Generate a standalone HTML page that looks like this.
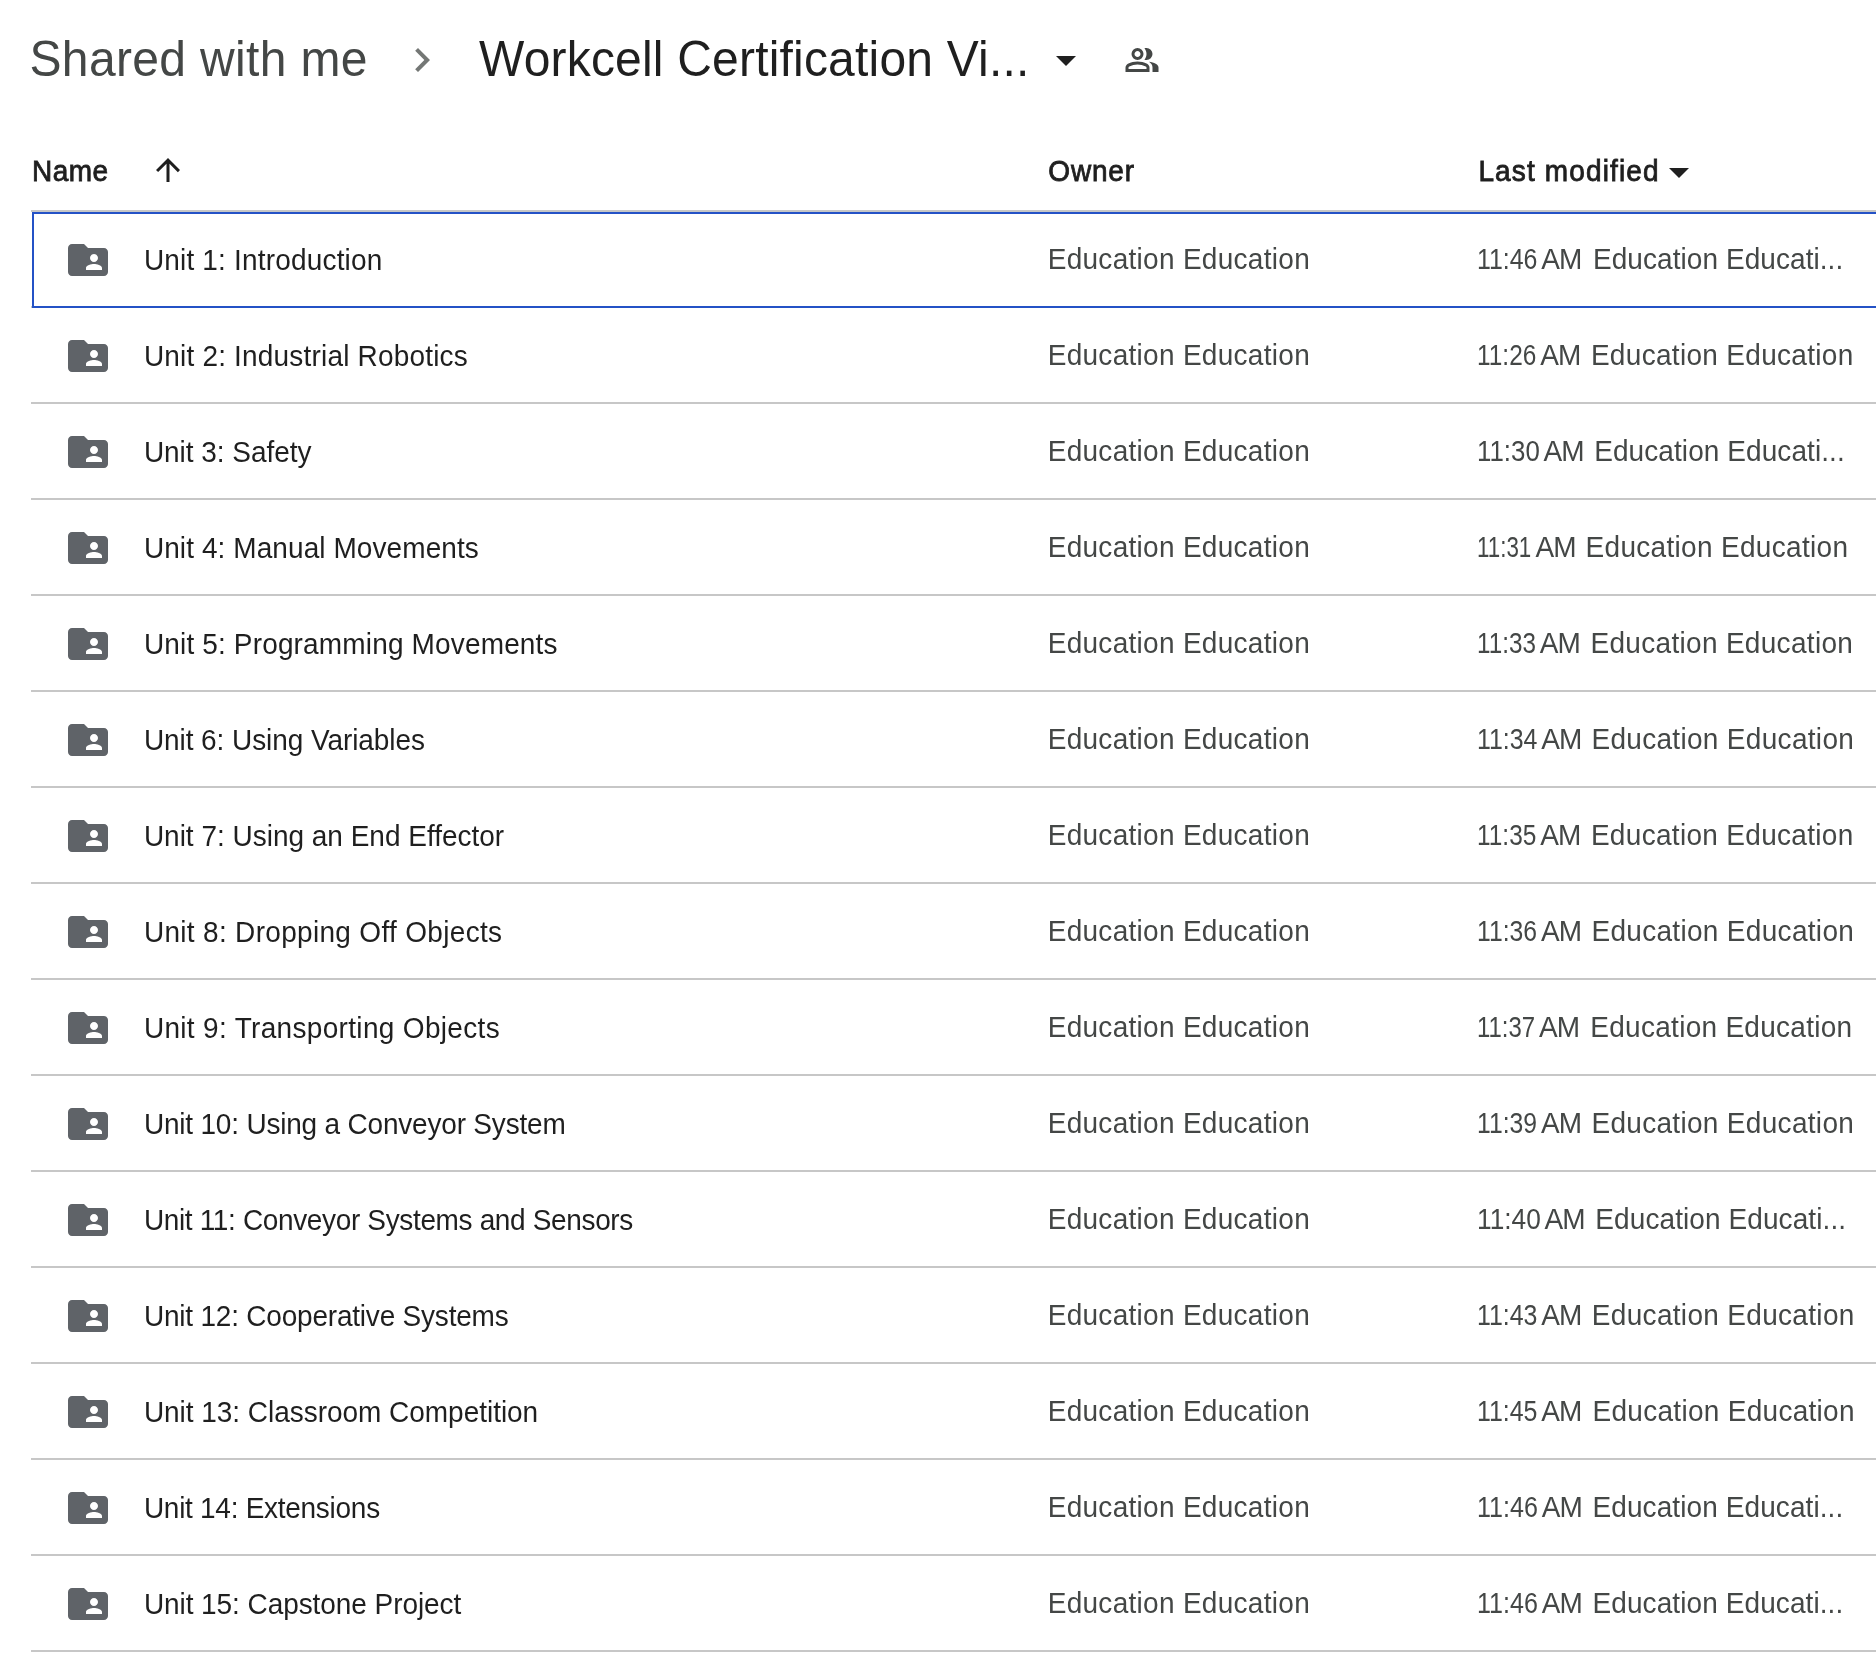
<!DOCTYPE html>
<html><head><meta charset="utf-8"><title>Workcell Certification</title>
<style>
html,body{margin:0;padding:0;background:#fff;width:1876px;height:1678px;overflow:hidden}
body{position:relative;font-family:"Liberation Sans",sans-serif;-webkit-font-smoothing:antialiased}
.t{position:absolute;white-space:nowrap;line-height:28px;font-size:28px;transform:scaleY(1.04);transform-origin:0 23px}
.h{position:absolute;white-space:nowrap;line-height:48px;font-size:48px;transform:scaleY(1.03);transform-origin:0 40px}
.nm{color:#1f1f1f}
.ow{color:#444746}
.hd{color:#1f1f1f;-webkit-text-stroke:0.8px #1f1f1f}
.sep{position:absolute;left:31px;right:0;height:2px;background:#c7c7c7}
.ic{position:absolute}
#wrap{position:absolute;left:0;top:0;width:1876px;height:1678px;will-change:transform;background:#fff}
</style></head><body><div id="wrap">

<div class="h" style="left:29.50px;top:35.60px;letter-spacing:0.346px;color:#444746">Shared with me</div>
<svg class="ic" style="left:398px;top:36px" width="48" height="48" viewBox="0 0 24 24"><path fill="#747775" d="M10 6L8.59 7.41 13.17 12l-4.58 4.59L10 18l6-6z"/></svg>
<div class="h" style="left:479.00px;top:35.60px;letter-spacing:0.193px;color:#1f1f1f">Workcell Certification Vi...</div>
<svg class="ic" style="left:1056px;top:56px" width="20" height="10" viewBox="0 0 20 10"><path fill="#1f1f1f" d="M0 0h20L10 10z"/></svg>
<svg class="ic" style="left:1123.5px;top:42px" width="36" height="36" viewBox="0 -960 960 960"><path fill="#444746" d="M40-160v-112q0-34 17.5-62.5T104-378q62-31 126-46.5T360-440q66 0 130 15.5T616-378q29 15 46.5 43.5T680-272v112H40Zm720 0v-120q0-44-24.5-84.5T666-434q51 6 96 20.5t84 35.5q36 20 55 44.5t19 53.5v120H760ZM360-480q-66 0-113-47t-47-113q0-66 47-113t113-47q66 0 113 47t47 113q0 66-47 113t-113 47Zm400-160q0 66-47 113t-113 47q-11 0-28-2.5t-28-5.5q27-32 41.5-71t14.5-81q0-42-14.5-81T544-792q14-5 28-6.5t28-1.5q66 0 113 47t47 113ZM120-240h480v-32q0-11-5.5-20T580-306q-54-27-109-40.5T360-360q-56 0-111 13.5T140-306q-9 5-14.5 14t-5.5 20v32Zm240-320q33 0 56.5-23.5T440-640q0-33-23.5-56.5T360-720q-33 0-56.5 23.5T280-640q0 33 23.5 56.5T360-560Zm0 80Zm0-80Z"/></svg>
<div class="t hd" style="left:32.10px;top:158.10px;letter-spacing:0.400px">Name</div>
<svg class="ic" style="left:150px;top:152px" width="36" height="36" viewBox="0 0 24 24"><path fill="#1f1f1f" d="M4 12l1.41 1.41L11 7.83V20h2V7.83l5.58 5.59L20 12l-8-8-8 8z"/></svg>
<div class="t hd" style="left:1048.30px;top:157.80px;letter-spacing:0.825px">Owner</div>
<div class="t hd" style="left:1478.40px;top:157.80px;letter-spacing:1.133px">Last modified</div>
<svg class="ic" style="left:1669px;top:168px" width="20" height="10" viewBox="0 0 20 10"><path fill="#1f1f1f" d="M0 0h20L10 10z"/></svg>
<div class="sep" style="top:210px"></div>
<div class="sep" style="top:306px"></div>
<svg class="ic" style="left:64px;top:236px" width="48" height="48" viewBox="0 0 24 24" fill="#5f6368"><path d="M20 6h-8l-2-2H4c-1.1 0-1.99.9-1.99 2L2 18c0 1.1.9 2 2 2h16c1.1 0 2-.9 2-2V8c0-1.1-.9-2-2-2zm-5 3c1.1 0 2 .9 2 2s-.9 2-2 2-2-.9-2-2 .9-2 2-2zm4 8h-8v-1c0-1.33 2.67-2 4-2s4 .67 4 2v1z"/></svg>
<div class="t nm" style="left:143.90px;top:247.00px;letter-spacing:0.179px">Unit 1: Introduction</div>
<div class="t ow" style="left:1047.70px;top:246.00px;letter-spacing:0.289px">Education Education</div>
<div class="t ow" style="left:1477.22px;top:246px;transform:scale(0.8892,1.04);transform-origin:0 23px">11:46</div>
<div class="t ow" style="left:1541.30px;top:246.00px;letter-spacing:-0.900px">AM</div>
<div class="t ow" style="left:1593.00px;top:246.00px;letter-spacing:0.063px">Education Educati...</div>
<div class="sep" style="top:402px"></div>
<svg class="ic" style="left:64px;top:332px" width="48" height="48" viewBox="0 0 24 24" fill="#5f6368"><path d="M20 6h-8l-2-2H4c-1.1 0-1.99.9-1.99 2L2 18c0 1.1.9 2 2 2h16c1.1 0 2-.9 2-2V8c0-1.1-.9-2-2-2zm-5 3c1.1 0 2 .9 2 2s-.9 2-2 2-2-.9-2-2 .9-2 2-2zm4 8h-8v-1c0-1.33 2.67-2 4-2s4 .67 4 2v1z"/></svg>
<div class="t nm" style="left:143.90px;top:343.00px;letter-spacing:0.188px">Unit 2: Industrial Robotics</div>
<div class="t ow" style="left:1047.70px;top:342.00px;letter-spacing:0.289px">Education Education</div>
<div class="t ow" style="left:1477.26px;top:342px;transform:scale(0.8723,1.04);transform-origin:0 23px">11:26</div>
<div class="t ow" style="left:1540.20px;top:342.00px;letter-spacing:-0.900px">AM</div>
<div class="t ow" style="left:1590.90px;top:342.00px;letter-spacing:0.306px">Education Education</div>
<div class="sep" style="top:498px"></div>
<svg class="ic" style="left:64px;top:428px" width="48" height="48" viewBox="0 0 24 24" fill="#5f6368"><path d="M20 6h-8l-2-2H4c-1.1 0-1.99.9-1.99 2L2 18c0 1.1.9 2 2 2h16c1.1 0 2-.9 2-2V8c0-1.1-.9-2-2-2zm-5 3c1.1 0 2 .9 2 2s-.9 2-2 2-2-.9-2-2 .9-2 2-2zm4 8h-8v-1c0-1.33 2.67-2 4-2s4 .67 4 2v1z"/></svg>
<div class="t nm" style="left:143.90px;top:439.00px;letter-spacing:-0.031px">Unit 3: Safety</div>
<div class="t ow" style="left:1047.70px;top:438.00px;letter-spacing:0.289px">Education Education</div>
<div class="t ow" style="left:1477.15px;top:438px;transform:scale(0.9231,1.04);transform-origin:0 23px">11:30</div>
<div class="t ow" style="left:1543.50px;top:438.00px;letter-spacing:-0.900px">AM</div>
<div class="t ow" style="left:1594.20px;top:438.00px;letter-spacing:0.079px">Education Educati...</div>
<div class="sep" style="top:594px"></div>
<svg class="ic" style="left:64px;top:524px" width="48" height="48" viewBox="0 0 24 24" fill="#5f6368"><path d="M20 6h-8l-2-2H4c-1.1 0-1.99.9-1.99 2L2 18c0 1.1.9 2 2 2h16c1.1 0 2-.9 2-2V8c0-1.1-.9-2-2-2zm-5 3c1.1 0 2 .9 2 2s-.9 2-2 2-2-.9-2-2 .9-2 2-2zm4 8h-8v-1c0-1.33 2.67-2 4-2s4 .67 4 2v1z"/></svg>
<div class="t nm" style="left:143.90px;top:535.00px;letter-spacing:0.083px">Unit 4: Manual Movements</div>
<div class="t ow" style="left:1047.70px;top:534.00px;letter-spacing:0.289px">Education Education</div>
<div class="t ow" style="left:1477.40px;top:534px;transform:scale(0.7985,1.04);transform-origin:0 23px">11:31</div>
<div class="t ow" style="left:1535.40px;top:534.00px;letter-spacing:-0.900px">AM</div>
<div class="t ow" style="left:1585.50px;top:534.00px;letter-spacing:0.317px">Education Education</div>
<div class="sep" style="top:690px"></div>
<svg class="ic" style="left:64px;top:620px" width="48" height="48" viewBox="0 0 24 24" fill="#5f6368"><path d="M20 6h-8l-2-2H4c-1.1 0-1.99.9-1.99 2L2 18c0 1.1.9 2 2 2h16c1.1 0 2-.9 2-2V8c0-1.1-.9-2-2-2zm-5 3c1.1 0 2 .9 2 2s-.9 2-2 2-2-.9-2-2 .9-2 2-2zm4 8h-8v-1c0-1.33 2.67-2 4-2s4 .67 4 2v1z"/></svg>
<div class="t nm" style="left:143.90px;top:631.00px;letter-spacing:0.157px">Unit 5: Programming Movements</div>
<div class="t ow" style="left:1047.70px;top:630.00px;letter-spacing:0.289px">Education Education</div>
<div class="t ow" style="left:1477.27px;top:630px;transform:scale(0.8662,1.04);transform-origin:0 23px">11:33</div>
<div class="t ow" style="left:1539.80px;top:630.00px;letter-spacing:-0.900px">AM</div>
<div class="t ow" style="left:1590.50px;top:630.00px;letter-spacing:0.306px">Education Education</div>
<div class="sep" style="top:786px"></div>
<svg class="ic" style="left:64px;top:716px" width="48" height="48" viewBox="0 0 24 24" fill="#5f6368"><path d="M20 6h-8l-2-2H4c-1.1 0-1.99.9-1.99 2L2 18c0 1.1.9 2 2 2h16c1.1 0 2-.9 2-2V8c0-1.1-.9-2-2-2zm-5 3c1.1 0 2 .9 2 2s-.9 2-2 2-2-.9-2-2 .9-2 2-2zm4 8h-8v-1c0-1.33 2.67-2 4-2s4 .67 4 2v1z"/></svg>
<div class="t nm" style="left:143.90px;top:727.00px;letter-spacing:-0.073px">Unit 6: Using Variables</div>
<div class="t ow" style="left:1047.70px;top:726.00px;letter-spacing:0.289px">Education Education</div>
<div class="t ow" style="left:1477.22px;top:726px;transform:scale(0.8892,1.04);transform-origin:0 23px">11:34</div>
<div class="t ow" style="left:1541.30px;top:726.00px;letter-spacing:-0.900px">AM</div>
<div class="t ow" style="left:1591.40px;top:726.00px;letter-spacing:0.311px">Education Education</div>
<div class="sep" style="top:882px"></div>
<svg class="ic" style="left:64px;top:812px" width="48" height="48" viewBox="0 0 24 24" fill="#5f6368"><path d="M20 6h-8l-2-2H4c-1.1 0-1.99.9-1.99 2L2 18c0 1.1.9 2 2 2h16c1.1 0 2-.9 2-2V8c0-1.1-.9-2-2-2zm-5 3c1.1 0 2 .9 2 2s-.9 2-2 2-2-.9-2-2 .9-2 2-2zm4 8h-8v-1c0-1.33 2.67-2 4-2s4 .67 4 2v1z"/></svg>
<div class="t nm" style="left:143.90px;top:823.00px;letter-spacing:-0.011px">Unit 7: Using an End Effector</div>
<div class="t ow" style="left:1047.70px;top:822.00px;letter-spacing:0.289px">Education Education</div>
<div class="t ow" style="left:1477.26px;top:822px;transform:scale(0.8723,1.04);transform-origin:0 23px">11:35</div>
<div class="t ow" style="left:1540.20px;top:822.00px;letter-spacing:-0.900px">AM</div>
<div class="t ow" style="left:1590.90px;top:822.00px;letter-spacing:0.306px">Education Education</div>
<div class="sep" style="top:978px"></div>
<svg class="ic" style="left:64px;top:908px" width="48" height="48" viewBox="0 0 24 24" fill="#5f6368"><path d="M20 6h-8l-2-2H4c-1.1 0-1.99.9-1.99 2L2 18c0 1.1.9 2 2 2h16c1.1 0 2-.9 2-2V8c0-1.1-.9-2-2-2zm-5 3c1.1 0 2 .9 2 2s-.9 2-2 2-2-.9-2-2 .9-2 2-2zm4 8h-8v-1c0-1.33 2.67-2 4-2s4 .67 4 2v1z"/></svg>
<div class="t nm" style="left:143.90px;top:919.00px;letter-spacing:0.315px">Unit 8: Dropping Off Objects</div>
<div class="t ow" style="left:1047.70px;top:918.00px;letter-spacing:0.289px">Education Education</div>
<div class="t ow" style="left:1477.23px;top:918px;transform:scale(0.8831,1.04);transform-origin:0 23px">11:36</div>
<div class="t ow" style="left:1540.90px;top:918.00px;letter-spacing:-0.900px">AM</div>
<div class="t ow" style="left:1591.40px;top:918.00px;letter-spacing:0.311px">Education Education</div>
<div class="sep" style="top:1074px"></div>
<svg class="ic" style="left:64px;top:1004px" width="48" height="48" viewBox="0 0 24 24" fill="#5f6368"><path d="M20 6h-8l-2-2H4c-1.1 0-1.99.9-1.99 2L2 18c0 1.1.9 2 2 2h16c1.1 0 2-.9 2-2V8c0-1.1-.9-2-2-2zm-5 3c1.1 0 2 .9 2 2s-.9 2-2 2-2-.9-2-2 .9-2 2-2zm4 8h-8v-1c0-1.33 2.67-2 4-2s4 .67 4 2v1z"/></svg>
<div class="t nm" style="left:143.90px;top:1015.00px;letter-spacing:0.322px">Unit 9: Transporting Objects</div>
<div class="t ow" style="left:1047.70px;top:1014.00px;letter-spacing:0.289px">Education Education</div>
<div class="t ow" style="left:1477.29px;top:1014px;transform:scale(0.8554,1.04);transform-origin:0 23px">11:37</div>
<div class="t ow" style="left:1539.10px;top:1014.00px;letter-spacing:-0.900px">AM</div>
<div class="t ow" style="left:1590.30px;top:1014.00px;letter-spacing:0.278px">Education Education</div>
<div class="sep" style="top:1170px"></div>
<svg class="ic" style="left:64px;top:1100px" width="48" height="48" viewBox="0 0 24 24" fill="#5f6368"><path d="M20 6h-8l-2-2H4c-1.1 0-1.99.9-1.99 2L2 18c0 1.1.9 2 2 2h16c1.1 0 2-.9 2-2V8c0-1.1-.9-2-2-2zm-5 3c1.1 0 2 .9 2 2s-.9 2-2 2-2-.9-2-2 .9-2 2-2zm4 8h-8v-1c0-1.33 2.67-2 4-2s4 .67 4 2v1z"/></svg>
<div class="t nm" style="left:143.90px;top:1111.00px;letter-spacing:-0.197px">Unit 10: Using a Conveyor System</div>
<div class="t ow" style="left:1047.70px;top:1110.00px;letter-spacing:0.289px">Education Education</div>
<div class="t ow" style="left:1477.23px;top:1110px;transform:scale(0.8831,1.04);transform-origin:0 23px">11:39</div>
<div class="t ow" style="left:1540.90px;top:1110.00px;letter-spacing:-0.900px">AM</div>
<div class="t ow" style="left:1591.40px;top:1110.00px;letter-spacing:0.311px">Education Education</div>
<div class="sep" style="top:1266px"></div>
<svg class="ic" style="left:64px;top:1196px" width="48" height="48" viewBox="0 0 24 24" fill="#5f6368"><path d="M20 6h-8l-2-2H4c-1.1 0-1.99.9-1.99 2L2 18c0 1.1.9 2 2 2h16c1.1 0 2-.9 2-2V8c0-1.1-.9-2-2-2zm-5 3c1.1 0 2 .9 2 2s-.9 2-2 2-2-.9-2-2 .9-2 2-2zm4 8h-8v-1c0-1.33 2.67-2 4-2s4 .67 4 2v1z"/></svg>
<div class="t nm" style="left:143.90px;top:1207.00px;letter-spacing:-0.353px">Unit 11: Conveyor Systems and Sensors</div>
<div class="t ow" style="left:1047.70px;top:1206.00px;letter-spacing:0.289px">Education Education</div>
<div class="t ow" style="left:1477.12px;top:1206px;transform:scale(0.9385,1.04);transform-origin:0 23px">11:40</div>
<div class="t ow" style="left:1544.50px;top:1206.00px;letter-spacing:-0.900px">AM</div>
<div class="t ow" style="left:1595.30px;top:1206.00px;letter-spacing:0.089px">Education Educati...</div>
<div class="sep" style="top:1362px"></div>
<svg class="ic" style="left:64px;top:1292px" width="48" height="48" viewBox="0 0 24 24" fill="#5f6368"><path d="M20 6h-8l-2-2H4c-1.1 0-1.99.9-1.99 2L2 18c0 1.1.9 2 2 2h16c1.1 0 2-.9 2-2V8c0-1.1-.9-2-2-2zm-5 3c1.1 0 2 .9 2 2s-.9 2-2 2-2-.9-2-2 .9-2 2-2zm4 8h-8v-1c0-1.33 2.67-2 4-2s4 .67 4 2v1z"/></svg>
<div class="t nm" style="left:143.90px;top:1303.00px;letter-spacing:-0.207px">Unit 12: Cooperative Systems</div>
<div class="t ow" style="left:1047.70px;top:1302.00px;letter-spacing:0.289px">Education Education</div>
<div class="t ow" style="left:1477.22px;top:1302px;transform:scale(0.8892,1.04);transform-origin:0 23px">11:43</div>
<div class="t ow" style="left:1541.30px;top:1302.00px;letter-spacing:-0.900px">AM</div>
<div class="t ow" style="left:1591.80px;top:1302.00px;letter-spacing:0.317px">Education Education</div>
<div class="sep" style="top:1458px"></div>
<svg class="ic" style="left:64px;top:1388px" width="48" height="48" viewBox="0 0 24 24" fill="#5f6368"><path d="M20 6h-8l-2-2H4c-1.1 0-1.99.9-1.99 2L2 18c0 1.1.9 2 2 2h16c1.1 0 2-.9 2-2V8c0-1.1-.9-2-2-2zm-5 3c1.1 0 2 .9 2 2s-.9 2-2 2-2-.9-2-2 .9-2 2-2zm4 8h-8v-1c0-1.33 2.67-2 4-2s4 .67 4 2v1z"/></svg>
<div class="t nm" style="left:143.90px;top:1399.00px;letter-spacing:-0.034px">Unit 13: Classroom Competition</div>
<div class="t ow" style="left:1047.70px;top:1398.00px;letter-spacing:0.289px">Education Education</div>
<div class="t ow" style="left:1477.22px;top:1398px;transform:scale(0.8892,1.04);transform-origin:0 23px">11:45</div>
<div class="t ow" style="left:1541.30px;top:1398.00px;letter-spacing:-0.900px">AM</div>
<div class="t ow" style="left:1592.50px;top:1398.00px;letter-spacing:0.289px">Education Education</div>
<div class="sep" style="top:1554px"></div>
<svg class="ic" style="left:64px;top:1484px" width="48" height="48" viewBox="0 0 24 24" fill="#5f6368"><path d="M20 6h-8l-2-2H4c-1.1 0-1.99.9-1.99 2L2 18c0 1.1.9 2 2 2h16c1.1 0 2-.9 2-2V8c0-1.1-.9-2-2-2zm-5 3c1.1 0 2 .9 2 2s-.9 2-2 2-2-.9-2-2 .9-2 2-2zm4 8h-8v-1c0-1.33 2.67-2 4-2s4 .67 4 2v1z"/></svg>
<div class="t nm" style="left:143.90px;top:1495.00px;letter-spacing:-0.278px">Unit 14: Extensions</div>
<div class="t ow" style="left:1047.70px;top:1494.00px;letter-spacing:0.289px">Education Education</div>
<div class="t ow" style="left:1477.21px;top:1494px;transform:scale(0.8954,1.04);transform-origin:0 23px">11:46</div>
<div class="t ow" style="left:1541.70px;top:1494.00px;letter-spacing:-0.900px">AM</div>
<div class="t ow" style="left:1592.50px;top:1494.00px;letter-spacing:0.089px">Education Educati...</div>
<div class="sep" style="top:1650px"></div>
<svg class="ic" style="left:64px;top:1580px" width="48" height="48" viewBox="0 0 24 24" fill="#5f6368"><path d="M20 6h-8l-2-2H4c-1.1 0-1.99.9-1.99 2L2 18c0 1.1.9 2 2 2h16c1.1 0 2-.9 2-2V8c0-1.1-.9-2-2-2zm-5 3c1.1 0 2 .9 2 2s-.9 2-2 2-2-.9-2-2 .9-2 2-2zm4 8h-8v-1c0-1.33 2.67-2 4-2s4 .67 4 2v1z"/></svg>
<div class="t nm" style="left:143.90px;top:1591.00px;letter-spacing:-0.071px">Unit 15: Capstone Project</div>
<div class="t ow" style="left:1047.70px;top:1590.00px;letter-spacing:0.289px">Education Education</div>
<div class="t ow" style="left:1477.21px;top:1590px;transform:scale(0.8954,1.04);transform-origin:0 23px">11:46</div>
<div class="t ow" style="left:1541.70px;top:1590.00px;letter-spacing:-0.900px">AM</div>
<div class="t ow" style="left:1592.50px;top:1590.00px;letter-spacing:0.089px">Education Educati...</div>
<div style="position:absolute;left:32px;top:212px;width:1900px;height:92px;border:2px solid #2452c6;border-right:none"></div>
</div></body></html>
